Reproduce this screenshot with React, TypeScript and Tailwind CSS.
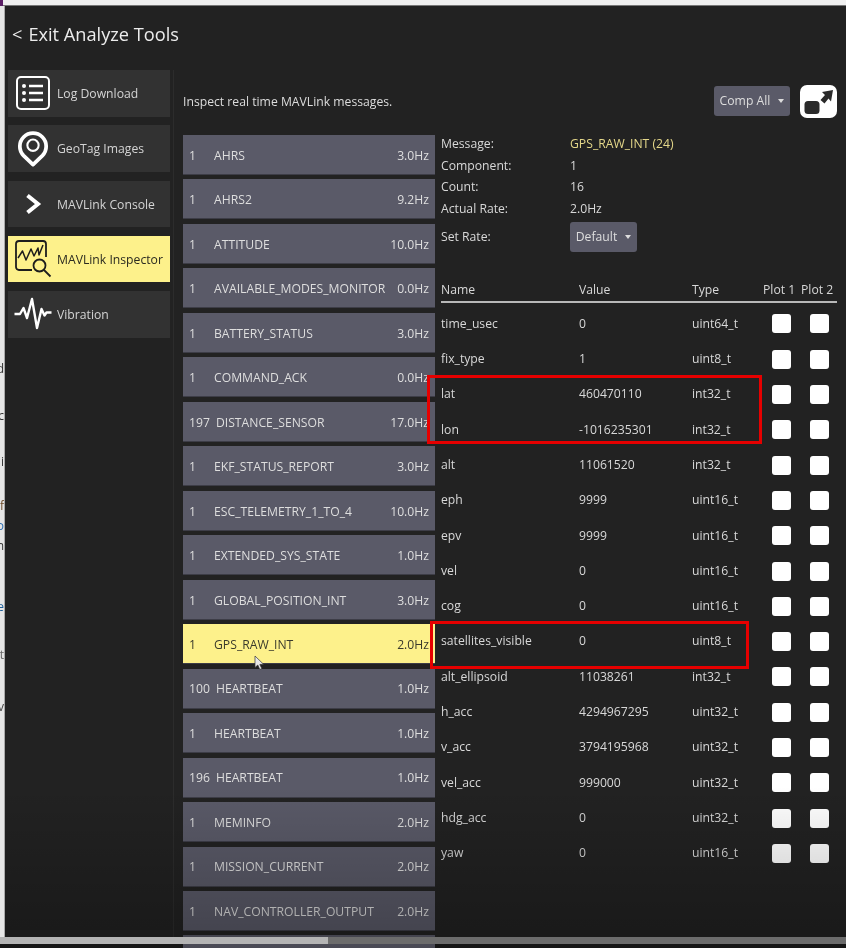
const tools = [
  { label: 'Log Download', icon: <LogIcon /> },
  { label: 'GeoTag Images', icon: <PinIcon /> },
  { label: 'MAVLink Console', icon: <ChevronIcon /> },
  { label: 'MAVLink Inspector', icon: <InspectorIcon />, active: true },
  { label: 'Vibration', icon: <VibrationIcon /> },
];

const messages = [
  ['1', 'AHRS', '3.0Hz'],
  ['1', 'AHRS2', '9.2Hz'],
  ['1', 'ATTITUDE', '10.0Hz'],
  ['1', 'AVAILABLE_MODES_MONITOR', '0.0Hz'],
  ['1', 'BATTERY_STATUS', '3.0Hz'],
  ['1', 'COMMAND_ACK', '0.0Hz'],
  ['197', 'DISTANCE_SENSOR', '17.0Hz'],
  ['1', 'EKF_STATUS_REPORT', '3.0Hz'],
  ['1', 'ESC_TELEMETRY_1_TO_4', '10.0Hz'],
  ['1', 'EXTENDED_SYS_STATE', '1.0Hz'],
  ['1', 'GLOBAL_POSITION_INT', '3.0Hz'],
  ['1', 'GPS_RAW_INT', '2.0Hz'],
  ['100', 'HEARTBEAT', '1.0Hz'],
  ['1', 'HEARTBEAT', '1.0Hz'],
  ['196', 'HEARTBEAT', '1.0Hz'],
  ['1', 'MEMINFO', '2.0Hz'],
  ['1', 'MISSION_CURRENT', '2.0Hz'],
  ['1', 'NAV_CONTROLLER_OUTPUT', '2.0Hz'],
];

const fields = [
  ['time_usec', '0', 'uint64_t'],
  ['fix_type', '1', 'uint8_t'],
  ['lat', '460470110', 'int32_t'],
  ['lon', '-1016235301', 'int32_t'],
  ['alt', '11061520', 'int32_t'],
  ['eph', '9999', 'uint16_t'],
  ['epv', '9999', 'uint16_t'],
  ['vel', '0', 'uint16_t'],
  ['cog', '0', 'uint16_t'],
  ['satellites_visible', '0', 'uint8_t'],
  ['alt_ellipsoid', '11038261', 'int32_t'],
  ['h_acc', '4294967295', 'uint32_t'],
  ['v_acc', '3794195968', 'uint32_t'],
  ['vel_acc', '999000', 'uint32_t'],
  ['hdg_acc', '0', 'uint32_t'],
  ['yaw', '0', 'uint16_t'],
];

const info = [
  ['Message:', 'GPS_RAW_INT (24)'],
  ['Component:', '1'],
  ['Count:', '16'],
  ['Actual Rate:', '2.0Hz'],
];

// bits of the window behind, cut off by the left edge
const behind = [
  { text: 'd', top: 356, color: 'text-[#333333]' },
  { text: 'c', top: 33, color: 'text-[#333333]' },
  { text: 'ui', top: 32, color: 'text-[#333333]' },
  { text: 'f', top: 30, color: 'text-[#6b4a2a]' },
  { text: 'o', top: 6, color: 'text-[#2b6cb0]' },
  { text: 'en', top: 6, color: 'text-[#333333]' },
  { text: 'le', top: 47, color: 'text-[#1f5f99]' },
  { text: 't', top: 34, color: 'text-[#666666]' },
  { text: 'v', top: 38, color: 'text-[#444444]' },
];

function LogIcon() {
  return (
    <svg width="36" height="36" viewBox="0 0 36 36" fill="none" stroke="#fff">
      <rect x="2" y="2" width="32" height="32" rx="4" strokeWidth="2" />
      <g strokeWidth="2.4">
        <path d="M14 11h14M14 18h14M14 25h14" />
      </g>
      <g fill="#fff" stroke="none">
        <circle cx="9" cy="11" r="2" />
        <circle cx="9" cy="18" r="2" />
        <circle cx="9" cy="25" r="2" />
      </g>
    </svg>
  );
}

function PinIcon() {
  return (
    <svg width="32" height="38" viewBox="0 0 34 40" fill="none" stroke="#fff">
      <path d="M17 36.5 L7 27 A14 14 0 1 1 27 27 Z" strokeWidth="4" strokeLinejoin="round" />
      <circle cx="17" cy="16" r="6" strokeWidth="2.2" />
    </svg>
  );
}

function ChevronIcon() {
  return (
    <svg width="18" height="22" viewBox="0 0 18 22" fill="none" stroke="#fff" strokeWidth="4">
      <path d="M3.5 2.5 L14 11 L3.5 19.5" strokeLinejoin="miter" />
    </svg>
  );
}

function InspectorIcon() {
  return (
    <svg width="38" height="38" viewBox="0 0 38 38" fill="none" stroke="#1d1d1d">
      <path d="M18 30H5a3 3 0 0 1-3-3V4a3 3 0 0 1 3-3h24a3 3 0 0 1 3 3v13" strokeWidth="1.8" />
      <path d="M4 18 L8.5 11 L12 20 L17 9 L20 16 L24 8 L25 15 L29 5" strokeWidth="1.5" strokeLinejoin="round" />
      <circle cx="25.5" cy="25.5" r="6" strokeWidth="1.8" />
      <path d="M30 30 L36.5 36.5" strokeWidth="1.8" />
    </svg>
  );
}

function VibrationIcon() {
  return (
    <svg width="38" height="34" viewBox="0 0 38 34" fill="none" stroke="#fff" strokeWidth="2.4" strokeLinejoin="round">
      <path d="M0.5 17H6L9.5 11L13 21L18 2L23 31L27.5 12L30.5 18.5L32.5 15.5H37.5" />
    </svg>
  );
}

function ExpandIcon() {
  return (
    <svg width="37" height="33" viewBox="0 0 37 33" fill="none">
      <rect x="4.5" y="16" width="15" height="13" rx="3.5" fill="#2a2a2a" />
      <path d="M33 5 L22 7 L25 10 L20.5 15 L24.5 18.5 L28.5 13.5 L31 16.5 Z" fill="#2a2a2a" />
    </svg>
  );
}

function Caret() {
  return <span className="ml-2 w-0 h-0 border-x-[3.5px] border-x-transparent border-t-[4px] border-t-[#dddddd]" />;
}

function ToolButton({ label, icon, active }: { label: string; icon: React.ReactNode; active?: boolean }) {
  return (
    <div className={`flex items-center h-[46.5px] ${active ? 'bg-[#fdf18b] text-[#2a2a20]' : 'bg-[#323232] text-[#d4d4d4]'}`}>
      <div className="w-[49px] shrink-0 flex justify-center">{icon}</div>
      <span className="pt-[2px] text-[12.2px] whitespace-nowrap">{label}</span>
    </div>
  );
}

function MessageRow({ count, name, rate }: { count: string; name: string; rate: string }) {
  const active = name === 'GPS_RAW_INT';
  return (
    <div
      className={`h-[40px] shrink-0 flex items-center gap-[6px] px-[6px] pt-[3px] text-[12.2px] whitespace-nowrap border-b border-b-[#3d3d47] ${
        active ? 'bg-[#fdf18b] text-[#3a3a2c]' : 'bg-[#5a5a68] text-[#dedede]'
      }`}
    >
      <span className="min-w-[19px]">{count}</span>
      <span className="flex-1">{name}</span>
      <span>{rate}</span>
    </div>
  );
}

function Check() {
  return <span className="block w-[18.5px] h-[19px] rounded-[3px] bg-white" />;
}

function FieldRow({ name, value, type }: { name: string; value: string; type: string }) {
  return (
    <div className="grid grid-cols-[138px_113px_71px_38px_36px] items-center h-[35.3px] text-[12.2px] text-[#d8d8d8] whitespace-nowrap">
      <span>{name}</span>
      <span>{value}</span>
      <span>{type}</span>
      <span className="pl-[9px]"><Check /></span>
      <span className="pl-[9px]"><Check /></span>
    </div>
  );
}

export default function App() {
  return (
    <div className="relative w-[846px] h-[948px] overflow-hidden bg-[#161616] font-['Open_Sans',sans-serif] blur-[0.45px]">
      {/* browser edge above */}
      <div className="h-[6px] bg-[#f0f0f0] border-b border-b-[#777777] flex">
        <div className="w-[3px] h-[15px] bg-[#5b1f66]" />
      </div>

      <div className="relative flex h-[931px] overflow-hidden">
        <div className="w-[5px] shrink-0 overflow-hidden bg-[#e6e6e6] border-r border-r-[#aaaaaa] text-[12px]">
          {behind.map((b, i) => (
            <div
              key={i}
              className={`h-[14px] leading-[14px] flex justify-end whitespace-nowrap ${b.color}`}
              style={{ marginTop: b.top }}
            >
              {b.text}
            </div>
          ))}
        </div>

        <div className="flex-1 min-w-0 bg-[#222222]">
          <div className="h-[64px] pl-[7px] pt-[15px] flex items-start gap-[6px] text-[18.2px] leading-[26px] text-[#ececec]">
            <span>&lt;</span>
            <span>Exit Analyze Tools</span>
          </div>

          <div className="flex h-[867px]">
            <div className="w-[169px] shrink-0 pl-[3px] pr-[3px] border-r border-r-[#2c2c2c] flex flex-col gap-[8.75px]">
              {tools.map(t => (
                <ToolButton key={t.label} label={t.label} icon={t.icon} active={t.active} />
              ))}
            </div>

            <div className="flex-1 min-w-0 pl-[9px] pr-[9px]">
              <div className="h-[65px] pt-[15px] flex items-start justify-between">
                <span className="pt-[1px] text-[12.2px] leading-[32px] text-[#dcdcdc]">Inspect real time MAVLink messages.</span>
                <div className="flex items-start gap-[10px]">
                  <div className="mt-[1px] h-[30px] w-[76px] rounded-[3px] bg-[#5a5a68] flex items-center justify-center text-[12.2px] text-[#dedede]">
                    Comp All<Caret />
                  </div>
                  <div className="h-[33px] w-[37px] rounded-[7px] bg-white">
                    <ExpandIcon />
                  </div>
                </div>
              </div>

              <div className="flex gap-[6px]">
                <div className="w-[252px] shrink-0 flex flex-col gap-[4.47px] h-[802px] overflow-hidden">
                  {messages.map((m, i) => (
                    <MessageRow key={i} count={m[0]} name={m[1]} rate={m[2]} />
                  ))}
                  <div className="h-[40px] shrink-0 bg-[#5a5a68]" />
                </div>

                <div className="flex-1 min-w-0">
                  <div className="grid grid-cols-[129px_1fr] text-[12.2px] text-[#d8d8d8] -mt-[2px]">
                    {info.map(([k, v], i) => (
                      <div key={k} className="contents">
                        <span className="h-[21.7px] leading-[21.7px]">{k}</span>
                        <span className={`h-[21.7px] leading-[21.7px] ${i === 0 ? 'text-[#e5d88a]' : ''}`}>{v}</span>
                      </div>
                    ))}
                    <span className="mt-[2.5px] h-[30px] leading-[30px]">Set Rate:</span>
                    <div>
                      <div className="mt-[2.5px] h-[30px] w-[67px] rounded-[3px] bg-[#5a5a68] flex items-center justify-center text-[#dedede]">
                        Default<Caret />
                      </div>
                    </div>
                  </div>

                  <div className="mt-[24.7px] h-[26px] pt-[2px] grid grid-cols-[138px_113px_71px_38px_36px] items-center border-b-2 border-b-[#b8b8b8] text-[12.2px] text-[#d8d8d8] whitespace-nowrap">
                    <span>Name</span>
                    <span>Value</span>
                    <span>Type</span>
                    <span>Plot 1</span>
                    <span>Plot 2</span>
                  </div>
                  <div className="mt-[3.35px]">
                    {fields.map(f => (
                      <FieldRow key={f[0]} name={f[0]} value={f[1]} type={f[2]} />
                    ))}
                  </div>
                </div>
              </div>
            </div>
          </div>
        </div>

        {/* video fade toward the bottom */}
        <div className="absolute left-[5px] right-0 bottom-0 h-[150px] bg-gradient-to-b from-transparent to-black/25 pointer-events-none" />
      </div>

      {/* annotation boxes and pointer on top */}
      <div className="absolute left-[427px] top-[375px] w-[335px] h-[69px] border-[3px] border-[#e60000] pointer-events-none" />
      <div className="absolute left-[430px] top-[621px] w-[319px] h-[48px] border-[3px] border-[#e60000] pointer-events-none" />
      <svg className="absolute left-[254px] top-[655px]" width="11" height="16" viewBox="0 0 11 16">
        <path d="M1 1 L1 12.5 L3.8 10 L5.8 14.5 L7.8 13.5 L5.8 9.5 L9.5 9.2 Z" fill="#e8e8e8" stroke="#333333" strokeWidth="0.7" />
      </svg>

      <div className="h-[7px] flex">
        <div className="w-[328px] bg-[#b4b4b4]" />
        <div className="flex-1 bg-[#6c6c6c]" />
      </div>
      <div className="h-[4px] bg-[#161616] pl-[183px]">
        <div className="h-full w-[252px] bg-[#4a4a55]" />
      </div>
    </div>
  );
}
